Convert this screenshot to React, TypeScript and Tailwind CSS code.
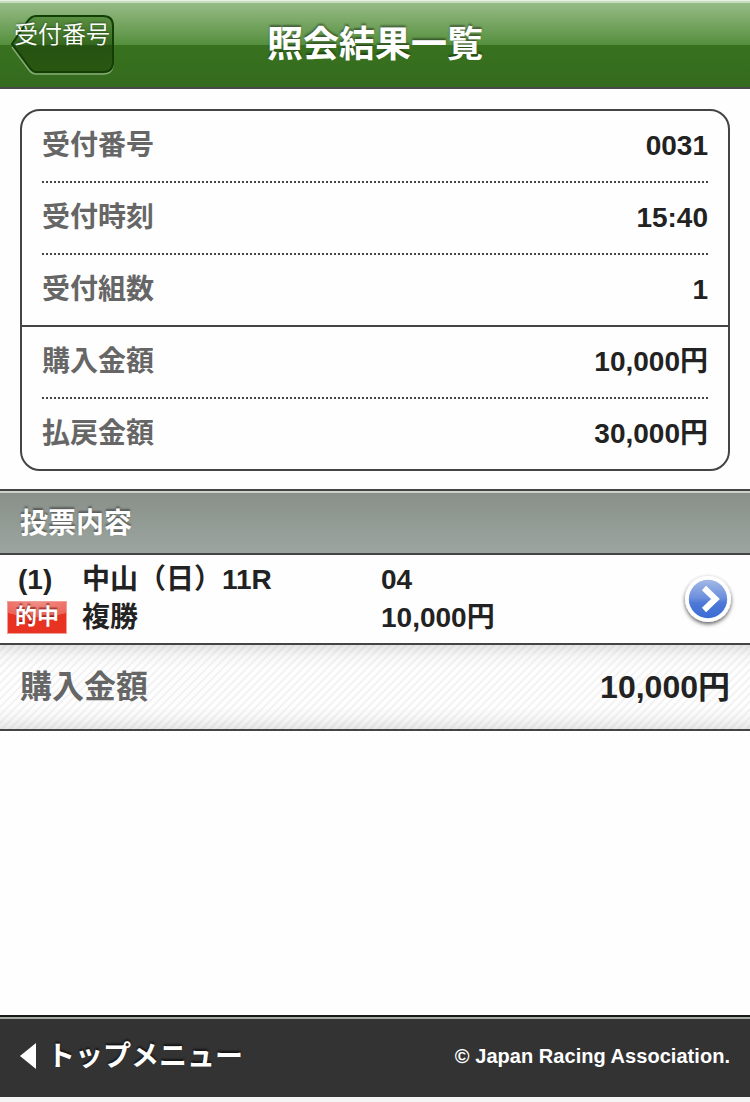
interface InfoRow {
  label: string;
  value: string;
  line: string;
}

const ROWS: InfoRow[] = [
  { label: '受付番号', value: '0031', line: 'dotted' },
  { label: '受付時刻', value: '15:40', line: 'dotted' },
  { label: '受付組数', value: '1', line: 'solid' },
  { label: '購入金額', value: '10,000円', line: 'dotted' },
  { label: '払戻金額', value: '30,000円', line: 'none' },
];

const LINES: Record<string, string> = {
  dotted: 'mx-5 bg-[repeating-linear-gradient(90deg,#444_0_2px,transparent_2px_4px)]',
  solid: 'bg-[#444444]',
};

function Header() {
  return (
    <header className="h-[89px] flex items-start border-b-2 border-[#474a46] bg-[linear-gradient(180deg,#eaf2e6_0_1px,#c8dcc0_1px_3px,#96bb86_3px,#558f3d_45px,#38721f_45px,#346a1e_87px)]">
      <div className="w-[125px] shrink-0 pl-[10px] pt-[14px]">
        <button className="relative block w-[105px] h-[61px]">
          <svg className="absolute inset-0" width="105" height="61" viewBox="0 0 105 61" fill="none">
            <defs>
              <linearGradient id="back" x1="0" y1="0" x2="0" y2="1">
                <stop offset="0" stopColor="#5b9143" />
                <stop offset="0.51" stopColor="#34681e" />
                <stop offset="0.52" stopColor="#265212" />
                <stop offset="1" stopColor="#2a5711" />
              </linearGradient>
            </defs>
            <path d="M25 3.5H93Q103 3.5 103 13.5V50Q103 60 93 60H26Q22 60 19 56L2 33" stroke="#86aa73" strokeWidth="1.5" />
            <path d="M26 2H93Q103 2 103 12V48Q103 58 93 58H27Q23 58 20 54L2 30L17 8Q21 2 26 2Z" fill="url(#back)" stroke="#123f05" strokeWidth="2" />
          </svg>
          <span className="relative block -mt-[19px] ml-1 w-24 h-10 text-left text-2xl leading-10 font-[350] text-white whitespace-nowrap [text-shadow:0_-1px_2px_rgba(0,0,0,0.35)]">受付番号</span>
        </button>
      </div>
      <h1 className="w-[500px] pt-[17px] text-center text-4xl leading-[56px] font-bold text-white [text-shadow:0_-2px_2px_rgba(0,0,0,0.4)]">照会結果一覧</h1>
    </header>
  );
}

function Chevron() {
  return (
    <svg width="60" height="60" viewBox="0 0 60 60" className="shrink-0">
      <defs>
        <linearGradient id="disc" x1="0" y1="0" x2="0" y2="1">
          <stop offset="0" stopColor="#a3b9e6" />
          <stop offset="0.48" stopColor="#6b8edc" />
          <stop offset="0.6" stopColor="#4d79d6" />
          <stop offset="1" stopColor="#3a6cd6" />
        </linearGradient>
        <filter id="shade" x="-30%" y="-30%" width="160%" height="160%">
          <feDropShadow dx="0" dy="2" stdDeviation="2" floodColor="#000" floodOpacity="0.65" />
        </filter>
      </defs>
      <circle cx="30" cy="30" r="23" fill="#fff" filter="url(#shade)" />
      <circle cx="30" cy="30" r="19.2" fill="url(#disc)" />
      <path d="M26 19L37.5 30L26 41" fill="none" stroke="#fff" strokeWidth="6" />
    </svg>
  );
}

export default function App() {
  return (
    <div className="w-[750px] h-[1102px] flex flex-col overflow-hidden bg-[#fefefe] text-[28px] font-bold text-[#222222] font-['Liberation_Sans','Noto_Sans_CJK_JP',sans-serif]">
      <Header />

      {/* Receipt summary */}
      <section className="mx-5 mt-5 h-[362px] shrink-0 border-2 border-[#444444] rounded-[20px]">
        {ROWS.map((row) => (
          <div key={row.label}>
            <div className="h-[70px] px-5 flex items-center justify-between leading-10">
              <span className="text-[#666666]">{row.label}</span>
              <span>{row.value}</span>
            </div>
            {row.line !== 'none' && <div className={`h-0.5 ${LINES[row.line]}`} />}
          </div>
        ))}
      </section>

      <h2 className="mt-[18px] h-[66px] shrink-0 px-5 border-y-2 border-[#444444] leading-[65px] text-white bg-[linear-gradient(180deg,#cdd1c9_0_2px,#899089_2px,#9ca5a0_100%)] [text-shadow:0_-2px_2px_rgba(0,0,0,0.4)]">
        投票内容
      </h2>

      {/* Bet */}
      <div className="h-[90px] shrink-0 flex items-center border-b-2 border-[#444444] leading-[38px]">
        <div className="w-[82px] pl-[7px]">
          <div className="pl-[11px]">(1)</div>
          <div className="h-[38px] flex items-start">
            <span className="w-[60px] h-[33px] mt-0.5 text-center text-[22px] leading-[29px] text-white border border-[#f0a098] bg-[radial-gradient(ellipse_44px_15px_at_50%_0,#f08e86,#ec645a_97%,#e83222_100%)] [text-shadow:0_-2px_1px_rgba(90,0,0,0.5)]">的中</span>
          </div>
        </div>
        <div className="w-[299px]">
          <div>中山（日）11R</div>
          <div>複勝</div>
        </div>
        <div className="flex-1">
          <div>04</div>
          <div>10,000円</div>
        </div>
        <button className="mr-3"><Chevron /></button>
      </div>

      {/* Total */}
      <div className="h-[86px] shrink-0 px-5 flex items-center justify-between border-b-2 border-[#444444] text-[32px] leading-10 bg-[linear-gradient(180deg,rgba(0,0,0,0.1),rgba(0,0,0,0.03)_10px,transparent_22px,transparent_62px,rgba(0,0,0,0.03)_74px,rgba(0,0,0,0.09)),repeating-linear-gradient(135deg,#fefefe_0_2.6px,#efefef_4.2px,#fefefe_5.66px)]">
        <span className="text-[#666666]">購入金額</span>
        <span>10,000円</span>
      </div>

      <footer className="mt-auto h-[82px] shrink-0 px-5 flex items-center justify-between border-t-2 border-[#151a15] text-white bg-[linear-gradient(180deg,#a4aaa4_0_2px,#333333_2px)]">
        <div className="flex items-center leading-10">
          <svg width="16" height="26" viewBox="0 0 16 26" fill="#fff" className="-mt-0.5">
            <path d="M16 0V26L0 13Z" />
          </svg>
          <span className="ml-[11px] [text-shadow:0_-2px_2px_rgba(0,0,0,0.6)]">トップメニュー</span>
        </div>
        <small className="-mt-0.5 text-xl tracking-[0.04px]">© Japan Racing Association.</small>
      </footer>
      <div className="h-[5px] shrink-0 bg-[#f4f4f4]" />
    </div>
  );
}
